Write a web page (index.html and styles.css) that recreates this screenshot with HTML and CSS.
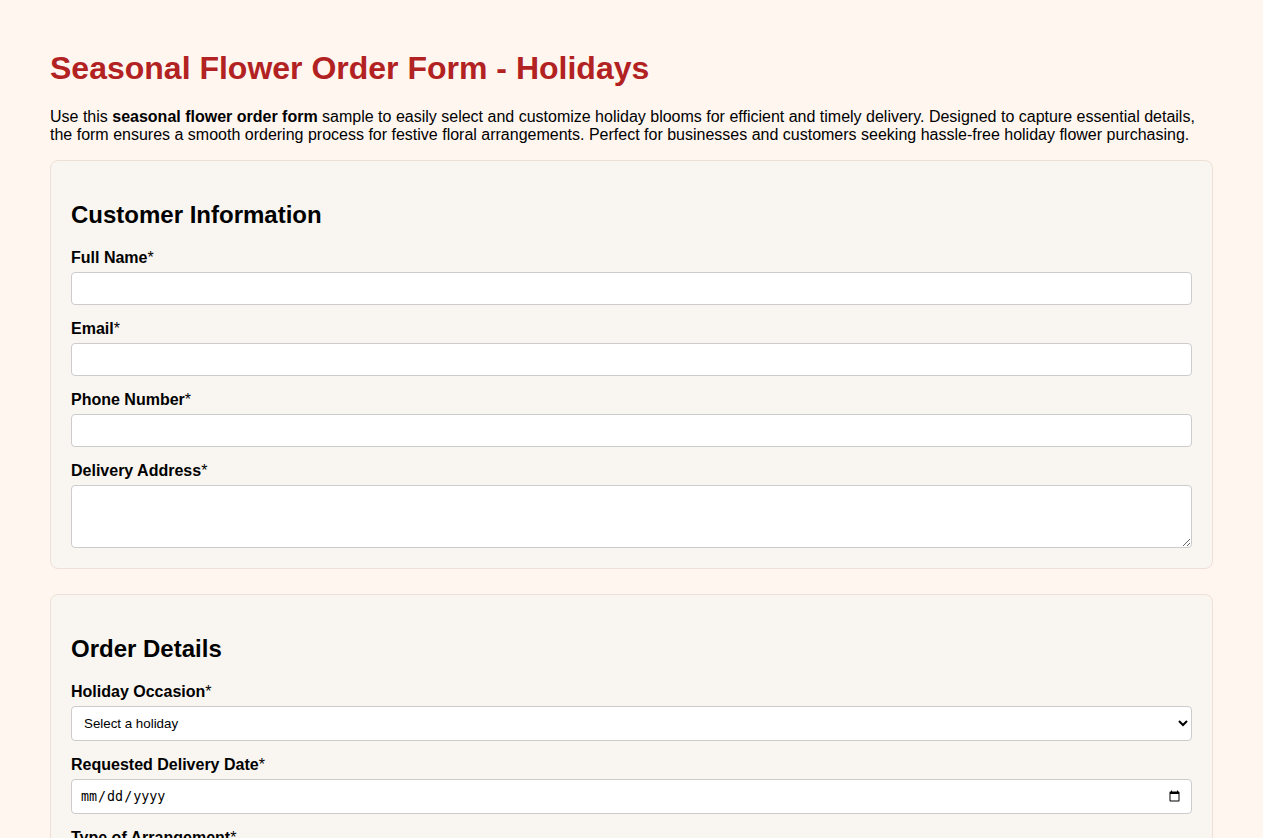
FILE: index.html
```html
<!DOCTYPE html>
<html lang="en">
<head>
    <meta charset="UTF-8">
    <meta name="viewport" content="width=device-width, initial-scale=1.0">
    <title>Seasonal Flower Order Form - Holidays</title>
    <link rel="stylesheet" href="styles.css">
</head>
<body>
    <h1>Seasonal Flower Order Form - Holidays</h1>
    <p class="intro">Use this <strong>seasonal flower order form</strong> sample to easily select and customize holiday blooms for efficient and timely delivery. Designed to capture essential details, the form ensures a smooth ordering process for festive floral arrangements. Perfect for businesses and customers seeking hassle-free holiday flower purchasing.</p>

    <form>
        <!-- 顧客資料 -->
        <div class="section">
            <h2>Customer Information</h2>
            <div class="field">
                <label for="full_name">Full Name<span class="req">*</span></label>
                <input type="text" id="full_name" name="full_name" required>
            </div>
            <div class="field">
                <label for="email">Email<span class="req">*</span></label>
                <input type="email" id="email" name="email" required>
            </div>
            <div class="field">
                <label for="phone">Phone Number<span class="req">*</span></label>
                <input type="tel" id="phone" name="phone" required>
            </div>
            <div class="field">
                <label for="address">Delivery Address<span class="req">*</span></label>
                <textarea id="address" name="address" rows="3" required></textarea>
            </div>
        </div>

        <!-- 訂單內容 -->
        <div class="section">
            <h2>Order Details</h2>
            <div class="field">
                <label for="holiday">Holiday Occasion<span class="req">*</span></label>
                <select id="holiday" name="holiday" required>
                    <option value="">Select a holiday</option>
                    <option>Christmas</option>
                    <option>Valentine's Day</option>
                    <option>Mother's Day</option>
                    <option>Easter</option>
                    <option>Thanksgiving</option>
                </select>
            </div>
            <div class="field">
                <label for="delivery_date">Requested Delivery Date<span class="req">*</span></label>
                <input type="date" id="delivery_date" name="delivery_date" required>
            </div>
            <div class="field">
                <label for="arrangement">Type of Arrangement<span class="req">*</span></label>
                <select id="arrangement" name="arrangement" required>
                    <option value="">Select an arrangement</option>
                    <option>Bouquet</option>
                    <option>Centerpiece</option>
                    <option>Wreath</option>
                </select>
            </div>
        </div>
    </form>
</body>
</html>
```

FILE: styles.css
```css
body {
    font-family: "Liberation Sans", Arial, sans-serif;
    background-color: #fff6f0;
    color: #000;
    margin: 0;
    padding: 29px 50px 40px;
}

h1 {
    color: #b22222;
    font-size: 32px;
    margin: 21px 0;
}

.intro {
    font-size: 16px;
    margin: 21px 0 16px;
}

.section {
    background-color: #f9f5f0;
    border: 1px solid #eee0d6;
    border-radius: 8px;
    padding: 20px;
    margin-bottom: 25px;
}

h2 {
    font-size: 24px;
    margin: 20px 0;
}

.field {
    margin-bottom: 15px;
}

.field:last-child {
    margin-bottom: 0;
}

label {
    display: block;
    font-weight: bold;
    font-size: 16px;
    margin-bottom: 5px;
}

.req {
    font-weight: normal;
}

input,
select,
textarea {
    display: block;
    width: 100%;
    box-sizing: border-box;
    padding: 8px;
    border: 1px solid #ccc;
    border-radius: 4px;
    background-color: #fff;
}

select {
    height: 35px;
}
```
